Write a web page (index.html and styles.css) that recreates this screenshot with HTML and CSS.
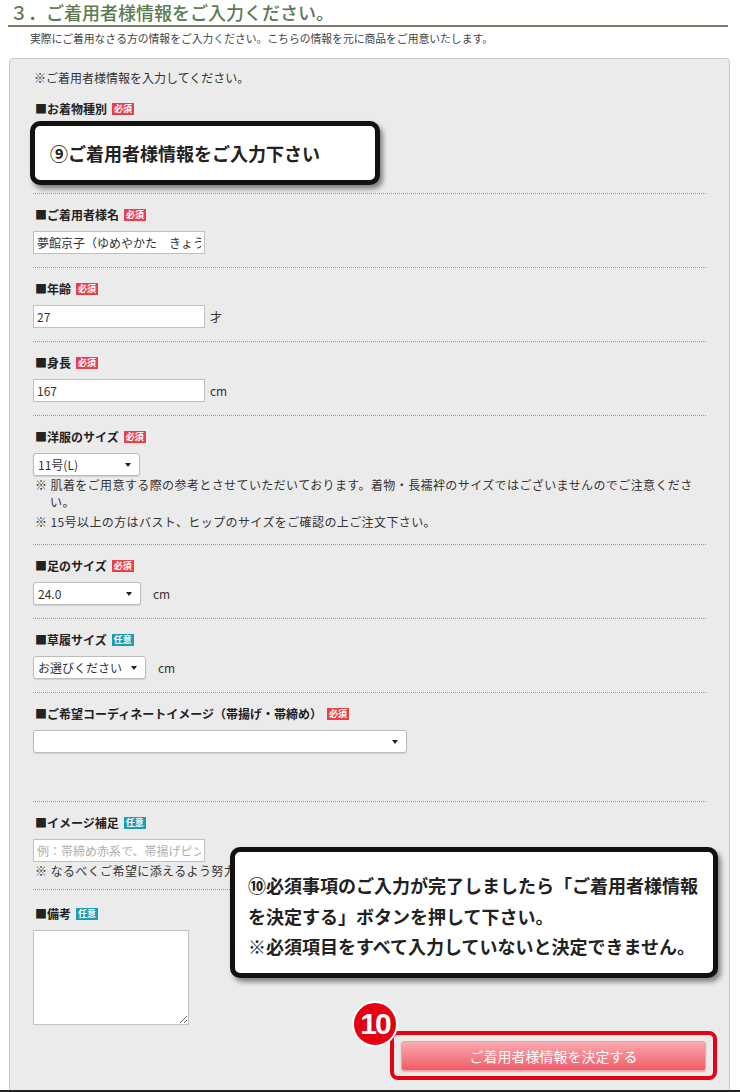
FILE: index.html
```html
<!DOCTYPE html>
<html lang="ja">
<head>
<meta charset="utf-8">
<title>ご着用者様情報</title>
<link rel="stylesheet" href="styles.css">
</head>
<body>
<div class="page">
  <h2 class="sec-title">３．ご着用者様情報をご入力ください。</h2>
  <p class="sec-lead">実際にご着用なさる方の情報をご入力ください。こちらの情報を元に商品をご用意いたします。</p>

  <div class="panel">
    <p class="intro">※ご着用者様情報を入力してください。</p>

    <div class="field">
      <div class="label">■お着物種別<span class="badge req">必須</span></div>
      <div class="kimono-area"></div>
    </div>

    <div class="field">
      <div class="label">■ご着用者様名<span class="badge req">必須</span></div>
      <div class="row"><input class="text" type="text" value="夢館京子（ゆめやかた　きょうこ）"></div>
    </div>

    <div class="field">
      <div class="label">■年齢<span class="badge req">必須</span></div>
      <div class="row"><input class="text" type="text" value="27"><span class="unit">才</span></div>
    </div>

    <div class="field">
      <div class="label">■身長<span class="badge req">必須</span></div>
      <div class="row"><input class="text" type="text" value="167"><span class="unit">cm</span></div>
    </div>

    <div class="field field-clothes">
      <div class="label">■洋服のサイズ<span class="badge req">必須</span></div>
      <div class="row">
        <span class="select-wrap"><select class="sel w107"><option>11号(L)</option></select></span>
      </div>
      <p class="note">※ 肌着をご用意する際の参考とさせていただいております。着物・長襦袢のサイズではございませんのでご注意ください。</p>
      <p class="note gap">※ 15号以上の方はバスト、ヒップのサイズをご確認の上ご注文下さい。</p>
    </div>

    <div class="field">
      <div class="label">■足のサイズ<span class="badge req">必須</span></div>
      <div class="row wide">
        <span class="select-wrap"><select class="sel w108"><option>24.0</option></select></span><span class="unit">cm</span>
      </div>
    </div>

    <div class="field">
      <div class="label">■草履サイズ<span class="badge opt">任意</span></div>
      <div class="row wide">
        <span class="select-wrap"><select class="sel w113"><option>お選びください</option></select></span><span class="unit">cm</span>
      </div>
    </div>

    <div class="field">
      <div class="label">■ご希望コーディネートイメージ（帯揚げ・帯締め）<span class="badge req">必須</span></div>
      <div class="row">
        <span class="select-wrap"><select class="sel w374"><option></option></select></span>
      </div>
      <div class="coord-extra"></div>
    </div>

    <div class="field field-image">
      <div class="label">■イメージ補足<span class="badge opt">任意</span></div>
      <div class="row"><input class="text" type="text" placeholder="例：帯締め赤系で、帯揚げピンク系"></div>
      <p class="note">※ なるべくご希望に添えるよう努力いたします。</p>
    </div>

    <div class="field field-memo">
      <div class="label">■備考<span class="badge opt">任意</span></div>
      <textarea class="memo"></textarea>
    </div>

    <div class="actions">
      <div class="submit-wrap">
        <button class="submit" type="button">ご着用者様情報を決定する</button>
        <span class="frame"></span>
        <span class="step-badge">10</span>
      </div>
    </div>

    <div class="callout callout-9">⑨ご着用者様情報をご入力下さい</div>
    <div class="callout callout-10">
      <span class="line">⑩必須事項のご入力が完了しましたら「ご着用者様情報</span>
      <span class="line">を決定する」ボタンを押して下さい。</span>
      <span class="line">※必須項目をすべて入力していないと決定できません。</span>
    </div>
  </div>
</div>
</body>
</html>
```

FILE: styles.css
```css
body {
  margin: 0;
  background: #fff;
  color: #333;
  font-family: "Noto Sans CJK JP", "Noto Sans", sans-serif;
}

.page {
  width: 740px;
  height: 1090px;
  border-bottom: 2px solid #222;
  overflow: hidden;
}

.sec-title {
  margin: 0 12px 0 8px;
  padding: 0 0 1px 2px;
  font-size: 18px;
  line-height: 24px;
  font-weight: 500;
  color: #5b7a50;
  border-bottom: 2px solid #7d7d6a;
  white-space: nowrap;
}

.sec-lead {
  margin: 4px 0 0;
  padding-left: 30px;
  font-size: 10.8px;
  line-height: 14px;
  color: #444;
}

.panel {
  position: relative;
  margin: 13px 0 0 9px;
  width: 721px;
  box-sizing: border-box;
  border: 1px solid #c9c9c9;
  border-radius: 4px;
  background: #ebebeb;
  padding: 11px 23px 40px;
}

.intro {
  margin: 0 0 2px;
  padding-left: 1px;
  font-size: 12px;
  line-height: 16px;
}

.field {
  padding: 13px 0;
  border-bottom: 1px dotted #999;
}

.field-clothes { padding-bottom: 14px; }
.field-image { padding-bottom: 10px; }
.field-memo { padding: 16px 0 0; border-bottom: none; }

.label {
  display: flex;
  align-items: center;
  gap: 5px;
  margin-bottom: 8px;
  padding-left: 2px;
  font-size: 12px;
  line-height: 16px;
  font-weight: bold;
  color: #222;
  white-space: nowrap;
}

.badge {
  display: inline-block;
  height: 12px;
  padding: 0 2px;
  font-size: 9px;
  line-height: 12px;
  font-weight: bold;
  color: #fff;
}

.req { background: #e8404a; }
.opt { background: #1b9db2; }

.kimono-area { height: 55px; }
.coord-extra { height: 35px; }

.row {
  display: flex;
  align-items: center;
  gap: 5px;
  font-size: 12px;
  line-height: 16px;
  color: #333;
}

.row.wide { gap: 12px; }

.text {
  width: 172px;
  height: 23px;
  box-sizing: border-box;
  border: 1px solid #c0c0c0;
  background: #fff;
  padding: 0 3px;
  font: 12px "Noto Sans CJK JP", sans-serif;
  color: #333;
}

.text::placeholder { color: #b0b0b0; }

.select-wrap {
  position: relative;
  display: inline-block;
  height: 23px;
}

.select-wrap::after {
  content: "";
  position: absolute;
  right: 9px;
  top: 10px;
  border-left: 3px solid transparent;
  border-right: 3px solid transparent;
  border-top: 4px solid #222;
  pointer-events: none;
}

.sel {
  appearance: none;
  -webkit-appearance: none;
  height: 23px;
  box-sizing: border-box;
  border: 1px solid #bcbcbc;
  border-radius: 3px;
  background: #fff;
  padding: 0 4px;
  font: 12px "Noto Sans CJK JP", sans-serif;
  color: #333;
  box-shadow: 0 1px 1px rgba(0, 0, 0, 0.12);
}

.w107 { width: 107px; }
.w108 { width: 108px; }
.w113 { width: 113px; }
.w374 { width: 374px; }

.note {
  margin: 0;
  padding-left: 17px;
  text-indent: -15px;
  font-size: 12px;
  line-height: 17px;
  letter-spacing: 0.4px;
  color: #333;
}

.note.gap { margin-top: 3px; }

.memo {
  display: block;
  width: 156px;
  height: 95px;
  box-sizing: border-box;
  border: 1px solid #c2c2c2;
  background: #fff;
  resize: both;
}

.actions {
  display: flex;
  justify-content: flex-end;
  margin-top: 16px;
}

.submit-wrap {
  position: relative;
}

.submit {
  display: block;
  width: 305px;
  height: 30px;
  border: 1px solid #eea0a6;
  border-radius: 3px;
  background: linear-gradient(#fdaab1, #ef5c67);
  color: #fff;
  font: 14px "Noto Sans CJK JP", sans-serif;
  box-shadow: 0 1px 2px rgba(0, 0, 0, 0.2);
}

.frame {
  position: absolute;
  left: -11px;
  right: -11px;
  top: -10px;
  bottom: -9px;
  border: 4px solid #e60012;
  border-radius: 8px;
}

.step-badge {
  position: absolute;
  left: -49px;
  top: -40px;
  width: 46px;
  height: 46px;
  box-sizing: border-box;
  border-radius: 50%;
  border: 2px solid #fff;
  background: #e60012;
  color: #fff;
  display: flex;
  align-items: center;
  justify-content: center;
  font: bold 30px "Liberation Sans", Arial, sans-serif;
  letter-spacing: -2px;
}

.callout {
  position: absolute;
  box-sizing: border-box;
  background: #fff;
  border: 5px solid #111;
  border-radius: 10px;
  box-shadow: 3px 4px 5px rgba(0, 0, 0, 0.45);
  font-weight: bold;
  color: #222;
  white-space: nowrap;
}

.callout-9 {
  left: 20px;
  top: 62px;
  width: 350px;
  height: 64px;
  display: flex;
  align-items: center;
  padding-left: 15px;
  font-size: 18px;
}

.callout-10 {
  left: 220px;
  top: 788px;
  width: 488px;
  height: 131px;
  padding: 18px 0 0 13px;
  font-size: 18px;
  line-height: 30.5px;
}

.callout-10 .line { display: block; }
```
